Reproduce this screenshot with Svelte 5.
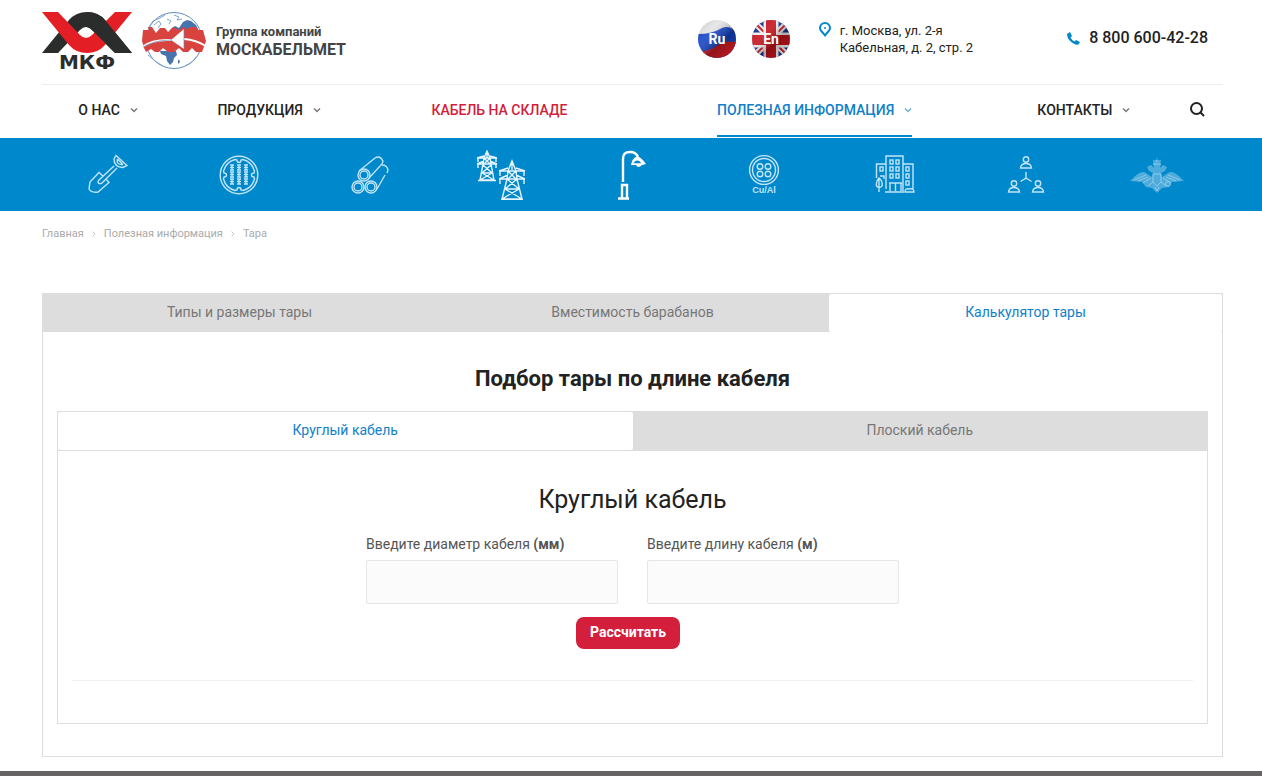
<script>
    // Main menu, "grow" sets the share of the row each item takes
    const menu = [
        { title: 'О нас', grow: 132, arrow: true },
        { title: 'Продукция', grow: 190, arrow: true },
        { title: 'Кабель на складе', grow: 270, sale: true },
        { title: 'Полезная информация', grow: 360, arrow: true, current: true },
        { title: 'Контакты', grow: 178, arrow: true }
    ];

    const breadcrumbs = ['Главная', 'Полезная информация', 'Тара'];
    const tabs = ['Типы и размеры тары', 'Вместимость барабанов', 'Калькулятор тары'];
    const cableTypes = ['Круглый кабель', 'Плоский кабель'];

    let activeTab = 2;
    let activeType = 0;
    let diameter = '';
    let length = '';

    // Hatch cells and windows are drawn in loops
    const hatchCells = [];
    for (const y of [11, 18, 25]) {
        for (const x of [11, 18, 25]) {
            hatchCells.push({ x, y });
        }
    }
    const windows = [
        [15, 6], [21, 6], [15, 13], [21, 13], [15, 20], [21, 20],
        [5, 13], [31, 13], [31, 20], [31, 27]
    ];
</script>

<div class="page">
    <header class="container">
        <div class="top">
            <a class="logo" href="/" aria-label="МКФ">
                <svg width="90" height="64" viewBox="0 0 90 64">
                    <clipPath id="right-half"><rect x="45" y="0" width="45" height="41" /></clipPath>
                    <path fill="#2b2d2c" d="M0 41H16L38 18Q44 12 50 18L73 41H90L63 8Q56 0 45 0Q34 0 27 8Z" />
                    <path fill="#e31e24" d="M0 0H16L38 23Q44 29 50 23L73 0H90L63 33Q56 41 45 41Q34 41 27 33Z" />
                    <path fill="#2b2d2c" clip-path="url(#right-half)" d="M0 41H16L38 18Q44 12 50 18L73 41H90L63 8Q56 0 45 0Q34 0 27 8Z" />
                    <text class="mkf" x="45" y="57" text-anchor="middle">МКФ</text>
                </svg>
            </a>
            <a class="group" href="/group">
                <svg width="66" height="58" viewBox="0 0 66 58">
                    <circle cx="33" cy="28.5" r="28" fill="#fff" stroke="#5f8bc0" />
                    <path fill="#4675ad" d="M29 18L34 14L38 16L42 10L46 8L50 9L55 13L58 19H29Z" />
                    <path fill="none" stroke="#7fa5d2" stroke-width="1" d="M8 15L12 9L19 6L24 3M7 43L14 49L22 54M57 43L51 50L44 54M13 13L18 9L20 12L17 16M26 7L30 9L28 12M33 3L38 5L36 8L41 7" />
                    <path fill="#4675ad" d="M19 39H35L36 43L33 46L32 50L29 53L26 49L25 44L20 42ZM37 49L38 47L39 50L37 52Z" />
                    <path fill="#d8433f" d="M2 18H8L7 15H11L15 21L19 16H24L27 20L32 15L38 18L42 15L46 17L50 15H55L57 18H62L65 29L61 40H55L51 36L47 40H42L38 36L33 40H27L22 36L18 40H14L10 37L5 40L3 36L1 29Z" />
                    <path fill="none" stroke="#fff" stroke-width="2" d="M1 35Q12 27 30 28M43 27Q55 28 65 34" />
                    <path fill="#fff" d="M43 17V37L30 28Z" />
                    <path fill="none" stroke="#6687b4" stroke-width=".7" d="M2 35Q14 28 30 28M43 37V18" />
                </svg>
                <span class="group-name">
                    <span class="small">Группа компаний</span>
                    <span class="big">МОСКАБЕЛЬМЕТ</span>
                </span>
            </a>

            <div class="langs">
                <a href="/ru" aria-label="Русский">
                    <svg width="38" height="38" viewBox="0 0 38 38">
                        <clipPath id="round"><circle cx="19" cy="19" r="19" /></clipPath>
                        <linearGradient id="shade" x1="0" y1="0" x2="1" y2="1">
                            <stop offset="0" stop-color="#000" stop-opacity=".1" />
                            <stop offset=".3" stop-color="#fff" stop-opacity=".1" />
                            <stop offset=".6" stop-color="#000" stop-opacity=".3" />
                            <stop offset="1" stop-color="#000" stop-opacity=".05" />
                        </linearGradient>
                        <g clip-path="url(#round)">
                            <path fill="#e4e4e4" d="M0 0H38V38H0Z" />
                            <path fill="#1646c8" d="M0 14Q14 14 24 8Q32 5 38 12V38H0Z" />
                            <path fill="#cf1d25" d="M0 32Q12 31 20 25Q28 20 38 22V38H0Z" />
                            <path fill="url(#shade)" d="M0 0H38V38H0Z" />
                        </g>
                        <text class="lang" x="19" y="24" text-anchor="middle">Ru</text>
                    </svg>
                </a>
                <a href="/en" aria-label="English">
                    <svg width="38" height="38" viewBox="0 0 38 38">
                        <g clip-path="url(#round)">
                            <path fill="#1f3193" d="M0 0H38V38H0Z" />
                            <path stroke="#f2f2f2" stroke-width="6" d="M0 0L38 38M38 0L0 38" />
                            <path stroke="#cf1d25" stroke-width="2" d="M0 0L38 38M38 0L0 38" />
                            <path stroke="#f2f2f2" stroke-width="15" d="M19 0V38M0 20H38" />
                            <path stroke="#c8141d" stroke-width="10" d="M19 0V38M0 20H38" />
                            <path fill="url(#shade)" d="M0 0H38V38H0Z" />
                        </g>
                        <text class="lang" x="19" y="24" text-anchor="middle">En</text>
                    </svg>
                </a>
            </div>

            <address>
                <svg width="12" height="15" viewBox="0 0 12 15" fill="none" stroke="#0088cc" stroke-width="2">
                    <path d="M6 13.4L2.300 9Q1 7.500 1 6A5 5 0 0 1 11 6Q11 7.500 9.700 9Z" />
                    <circle cx="6" cy="6" r="1" fill="#0088cc" stroke="none" />
                </svg>
                <span>г. Москва, ул. 2-я<br />Кабельная, д. 2, стр. 2</span>
            </address>

            <a class="phone" href="tel:88006004228">
                <svg width="13" height="13" viewBox="0 0 13 13">
                    <path fill="#0088cc" d="M0 2L3 0L5 4L3.500 5.500Q4.500 8 7.500 9.500L9 8L13 10L11.500 12.500Q9 13.500 5 10.500Q0 7 0 2Z" />
                </svg>
                8 800 600-42-28
            </a>
        </div>

        <nav class="menu">
            {#each menu as item}
                <div class="menu-item" style="flex-grow: {item.grow}">
                    <a href="/" class:sale={item.sale} class:current={item.current}>
                        {item.title}
                        {#if item.arrow}
                            <svg width="8" height="5" viewBox="0 0 8 5" fill="none" stroke="currentColor" stroke-width="1.5">
                                <path d="M1 .5L4 3.500L7 .5" />
                            </svg>
                        {/if}
                    </a>
                </div>
            {/each}
            <div class="menu-item" style="flex-grow: 50">
                <button class="search" aria-label="Поиск">
                    <svg width="15" height="15" viewBox="0 0 15 15" fill="none" stroke="#222" stroke-width="2">
                        <circle cx="6.500" cy="6.500" r="5.500" />
                        <path d="M10.500 10.500L14 14" />
                    </svg>
                </button>
            </div>
        </nav>
    </header>

    <div class="sections">
        <div class="container sections-grid">
            <a href="/" aria-label="Прокладка в земле">
                <svg width="40" height="42" viewBox="0 0 40 42">
                    <path d="M28 1.500L39 11.500L35 13.500Q26 13 26 5ZM29.500 5L35 10.500M29.500 5Q28 11 35 10.500M26 12L11 26Q9 28 11 29.500Q13 30 14 29L29 14M15 22L11 18.500L2 28L1 35Q3 39 10 38L21 28.500L18 25" />
                </svg>
            </a>
            <a href="/" aria-label="Канализация">
                <svg width="40" height="40" viewBox="0 0 40 40">
                    <circle cx="20" cy="20" r="18.800" />
                    <path d="M16 4.500L18 5Q18 7.500 20 7.500Q22 7.500 22 5L24 4.500Q33 7 35.500 16L35 18Q32.500 18 32.500 20Q32.500 22 35 22L35.500 24Q33 33 24 35.500L22 35Q22 32.500 20 32.500Q18 32.500 18 35L16 35.500Q7 33 4.500 24L5 22Q7.500 22 7.500 20Q7.500 18 5 18L4.500 16Q7 7 16 4.500Z" />
                    {#each hatchCells as cell}
                        <path d="M{cell.x} {cell.y - 1}h4m-4 2.500h4m-4 2.500h4m-2-5v5" />
                    {/each}
                </svg>
            </a>
            <a href="/" aria-label="Трубы">
                <svg width="40" height="40" viewBox="0 0 40 40">
                    <circle cx="14" cy="20" r="6" /><circle cx="14" cy="20" r="4" />
                    <circle cx="8" cy="32" r="6" /><circle cx="8" cy="32" r="4" />
                    <circle cx="21" cy="32" r="6" /><circle cx="21" cy="32" r="4" />
                    <path d="M9 16L25 3Q30 0 33 6L32 9L19 23M32 10Q37 10 38 15L37 18M35 20L27 34" />
                </svg>
            </a>
            <a href="/" aria-label="Воздушные линии">
                <svg class="bold" width="50" height="50" viewBox="0 0 50 50">
                    <path d="M8 8L11 1L14 8L15 14L18 30H4L7 14ZM1 8H21M1 14H21M1 8L8 6M21 8L14 6M1 14L8 11M21 14L14 11M7 15L16 23M15 15L6 23M6 23L18 30M16 23L4 30M2 8v4m18-4v4M2 14v4m18-4v4M2 30.500H20M8 8L14 14M14 8L8 14M6 23H16M11 1V8" />
                    <path d="M32 21L36 11L40 21L41 29L46 49H26L31 29ZM23 21H49M23 29H49M23 21L32 18M49 21L40 18M23 29L32 25M49 29L40 25M31 29L43 39M41 29L29 39M29 39L46 49M43 39L26 49M24 21v5m24-5v5M24 29v5m24-5v5M25 49.500H47M32 21L40 29M40 21L32 29M29 39H43M36 11V20" />
                </svg>
            </a>
            <a href="/" aria-label="Освещение">
                <svg class="lamp" width="28" height="50" viewBox="0 0 28 50">
                    <path d="M5 32V9Q5 2 12 2Q18 2 20 7M4 48V35H9V48M0 48.500H11" />
                    <path fill="#fff" stroke="none" d="M13 15Q14 7 20 6.500Q24 8 28 14L24 15Q20 19 18 15Z" />
                    <path fill="#0088cc" stroke="none" d="M15.500 13.300Q17 10.500 19 10.500Q22 10.500 23 13.300Z" />
                </svg>
            </a>
            <a href="/" aria-label="Медь и алюминий">
                <svg width="32" height="42" viewBox="0 0 32 42">
                    <circle cx="16" cy="16" r="14.400" /><circle cx="16" cy="16" r="11.500" />
                    <circle cx="12" cy="12.500" r="2.800" /><circle cx="20" cy="12.500" r="2.800" />
                    <circle cx="12" cy="20" r="2.800" /><circle cx="20" cy="20" r="2.800" />
                    <text class="metal" x="16" y="39" text-anchor="middle">Cu/Al</text>
                </svg>
            </a>
            <a href="/" aria-label="Здания">
                <svg width="40" height="42" viewBox="0 0 40 42">
                    <path d="M11 35V2H28V37M11 10H1.500V24M28 10H38V35M10 38H29M15 37V29H26V37M14 29H27M20.500 29V37M4 38V25M1.500 32Q1 27 4 24Q8 27 7 32Q4 35 1.500 32ZM30 38Q30 34 34 35Q39 34 39 38ZM5 22H9V25" />
                    {#each windows as [x, y]}
                        <rect {x} {y} width="3" height="4" />
                    {/each}
                </svg>
            </a>
            <a href="/" aria-label="Сеть">
                <svg width="38" height="40" viewBox="0 0 38 40">
                    {#each [[19, 1], [7, 25], [31, 25]] as [x, y]}
                        <circle cx={x} cy={y + 3.500} r="2.700" />
                        <path d="M{x - 5.500} {y + 12}Q{x - 5} {y + 7.500} {x} {y + 7.500}Q{x + 5} {y + 7.500} {x + 5.500} {y + 12}Z" />
                    {/each}
                    <path d="M19 17V23L13.500 26.500M19 23L24.500 26.500" />
                </svg>
            </a>
            <a href="/" aria-label="Министерство обороны">
                <svg class="eagle" width="56" height="38" viewBox="0 0 56 38">
                    <path fill="#9bd0ec" fill-opacity=".5" stroke="none" d="M1 25Q12 13 17 17L23 21L24 17L20 15L18 11L22 9L25 12L24 7L27 5L28 1L29 5L32 7L31 12L34 9L38 11L36 15L32 17L33 21L39 17Q44 13 55 25L43 26L39 31L33 32L28 37L23 32L17 31L13 26Z" />
                    <path d="M5 24L17 19M9 25L19 21M14 27L22 22M51 24L39 19M47 25L37 21M42 27L34 22M24 18H32V26L28 30L24 26ZM24 5H32M24 8H32M19 30L24 26M37 30L32 26M26 31L28 35L30 31" />
                    <circle cx="39" cy="28" r="2.500" />
                </svg>
            </a>
        </div>
    </div>

    <main class="container">
        <nav class="breadcrumbs">
            {#each breadcrumbs as crumb, i}
                {#if i > 0}
                    <svg width="4" height="6" viewBox="0 0 4 6" fill="none" stroke="#ccc">
                        <path d="M.5.5L3 3L.5 5.500" />
                    </svg>
                {/if}
                <a href="/">{crumb}</a>
            {/each}
        </nav>

        <section class="panel">
            <div class="tabs" role="tablist">
                {#each tabs as tab, i}
                    <button role="tab" aria-selected={activeTab === i} class:active={activeTab === i} on:click={() => activeTab = i}>{tab}</button>
                {/each}
            </div>

            <div class="panel-body">
                <h2>Подбор тары по длине кабеля</h2>

                <div class="panel">
                    <div class="tabs inner" role="tablist">
                        {#each cableTypes as type, i}
                            <button role="tab" aria-selected={activeType === i} class:active={activeType === i} on:click={() => activeType = i}>{type}</button>
                        {/each}
                    </div>

                    <form class="calculator" on:submit|preventDefault>
                        <h3>{cableTypes[activeType]}</h3>
                        <div class="fields">
                            <div class="field">
                                <label for="diameter">Введите диаметр кабеля <b>(мм)</b></label>
                                <input id="diameter" type="text" bind:value={diameter} />
                            </div>
                            <div class="field">
                                <label for="length">Введите длину кабеля <b>(м)</b></label>
                                <input id="length" type="text" bind:value={length} />
                            </div>
                        </div>
                        <button class="submit">Рассчитать</button>
                        <hr />
                    </form>
                </div>
            </div>
        </section>
    </main>

    <footer></footer>
</div>

<style>
    :global(body) {
        margin: 0;
        background: #fff;
    }

    .page {
        font-family: Roboto, 'Open Sans', sans-serif;
        font-size: 14px;
        line-height: 20px;
        color: #555;
    }

    .page :global(*) {
        box-sizing: border-box;
    }

    a {
        color: inherit;
        text-decoration: none;
    }

    button {
        font-family: inherit;
        cursor: pointer;
    }

    svg {
        display: block;
        flex: none;
    }

    .container {
        padding: 0 39px 0 42px;
    }

    /* Header */
    .top {
        display: flex;
        align-items: flex-start;
        height: 85px;
        padding: 12px 15px 0 0;
        border-bottom: 1px solid #eee;
    }

    .mkf {
        font: bold 20px 'DejaVu Sans', sans-serif;
        fill: #2b2d2c;
    }

    .group {
        display: flex;
        margin-left: 9px;
        gap: 9px;
    }

    .group-name {
        display: flex;
        flex-direction: column;
        padding-top: 11px;
        font-weight: bold;
        color: #444;
    }

    .small {
        font-size: 13px;
        line-height: 18px;
    }

    .big {
        font-size: 16px;
        line-height: 18px;
    }

    .langs {
        display: flex;
        gap: 16px;
        margin-left: auto;
        padding-top: 8px;
    }

    .lang {
        font: bold 14px Roboto, sans-serif;
        fill: #fff;
    }

    address {
        display: flex;
        gap: 9px;
        margin-left: 29px;
        padding-top: 10px;
        font-size: 13px;
        font-style: normal;
        line-height: 17px;
        color: #222;
    }

    .phone {
        display: flex;
        align-items: center;
        gap: 9px;
        margin-left: 94px;
        padding-top: 16px;
        font-size: 16px;
        font-weight: 500;
        color: #222;
    }

    /* Menu */
    .menu {
        display: flex;
        height: 53px;
    }

    .menu-item {
        display: flex;
        flex-basis: 0;
        justify-content: center;
    }

    .menu-item a {
        display: flex;
        align-items: center;
        gap: 10px;
        height: 52px;
        border-bottom: 2px solid transparent;
        font-weight: 500;
        text-transform: uppercase;
        white-space: nowrap;
        color: #222;
    }

    .menu-item a svg {
        opacity: 0.6;
    }

    .menu-item a.sale {
        color: #d31e3c;
    }

    .menu-item a.current {
        border-color: #0088cc;
        color: #1080c8;
    }

    .search {
        padding: 0 0 4px;
        border: 0;
        background: none;
    }

    /* Blue strip with product groups */
    .sections {
        background: #0088cc;
    }

    .sections-grid {
        display: grid;
        grid-template-columns: repeat(9, 1fr);
        align-items: center;
        justify-items: center;
        height: 73px;
    }

    .sections svg {
        fill: none;
        stroke: #c2e4f5;
        stroke-width: 1.4;
    }

    .sections svg.bold {
        stroke: #e6f5fc;
    }

    .sections svg.lamp {
        stroke: #fff;
        stroke-width: 2.4;
    }

    .sections svg.eagle {
        stroke: #8ccaea;
        stroke-width: 1;
    }

    .metal {
        font: bold 9px 'Liberation Sans', sans-serif;
        fill: #c2e4f5;
        stroke: none;
    }

    .breadcrumbs {
        display: flex;
        align-items: center;
        gap: 8px;
        padding: 13px 0 49px;
        font-size: 11px;
        color: #aaa;
    }

    /* Tabs and calculator */
    .panel {
        border: 1px solid #ddd;
    }

    .tabs {
        display: flex;
        background: #ddd;
    }

    .tabs button {
        flex: 1;
        height: 38px;
        padding: 0 0 2px;
        border: 0;
        border-radius: 2px;
        background: #ddd;
        font-size: 14px;
        color: #777;
    }

    .tabs .active {
        background: #fff;
        color: #1080c8;
    }

    .tabs.inner {
        border-bottom: 1px solid #ddd;
    }

    .panel-body {
        padding: 32px 14px;
    }

    h2 {
        margin: 0 0 17px;
        font-size: 22px;
        font-weight: 700;
        line-height: 30px;
        text-align: center;
        color: #222;
    }

    .calculator {
        display: flex;
        flex-direction: column;
        align-items: center;
        padding: 33px 14px 42px;
    }

    h3 {
        margin: 0;
        font-size: 25px;
        font-weight: 400;
        line-height: 32px;
        color: #222;
    }

    .fields {
        display: flex;
        gap: 29px;
        margin-top: 18px;
    }

    .field {
        display: flex;
        flex-direction: column;
        gap: 6px;
        width: 252px;
    }

    .field input {
        height: 44px;
        padding: 0 12px;
        border: 1px solid #e6e6e6;
        border-radius: 2px;
        background: #fbfbfb;
        font: inherit;
    }

    .submit {
        height: 32px;
        margin: 13px 9px 31px 0;
        padding: 0 14px 2px;
        border: 0;
        border-radius: 8px;
        background: #d31e3c;
        font-size: 14px;
        font-weight: 700;
        color: #fff;
    }

    hr {
        width: 100%;
        margin: 0;
        border: 0;
        border-top: 1px solid #f0f0f0;
    }

    footer {
        height: 5px;
        margin-top: 14px;
        background: #666465;
    }
</style>
